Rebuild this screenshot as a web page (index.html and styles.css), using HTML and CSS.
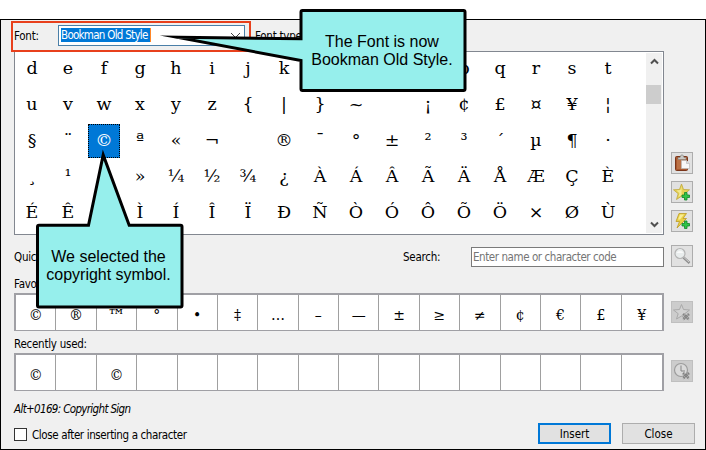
FILE: index.html
```
<!DOCTYPE html>
<html lang="en">
<head>
<meta charset="utf-8">
<title>Insert Symbol</title>
<link rel="stylesheet" href="styles.css">
</head>
<body>
<main class="dialog">
  <div class="font-row">
    <div class="font-field">
      <span class="font-label">Font:</span>
      <div class="combo"><span class="selected-text">Bookman Old Style</span>
        <svg class="chevron" width="11" height="7" viewBox="0 0 11 7"><path d="M1 1l4.500 4.500L10 1" fill="none" stroke="#444"/></svg>
      </div>
    </div>
    <span class="type-label">Font type:</span>
  </div>

  <div class="row row-chars">
    <div class="panel">
      <div class="chars" id="chars"></div>
      <div class="scrollbar">
        <svg width="9" height="7" viewBox="0 0 9 7"><path d="M1 5.500l3.500-3.500 3.500 3.500" fill="none" stroke="#505050" stroke-width="2"/></svg>
        <div class="thumb"></div>
        <svg class="down" width="9" height="7" viewBox="0 0 9 7"><path d="M1 1.500l3.500 3.500 3.500-3.500" fill="none" stroke="#505050" stroke-width="2"/></svg>
      </div>
    </div>
    <div class="tools">
      <button class="icon-btn" aria-label="Copy">
        <svg width="16" height="18" viewBox="0 0 16 18"><rect x="1.500" y="2.500" width="12" height="14" rx="1" fill="#a9582f" stroke="#7a351a"/><path d="M3 5h5v10H3z" fill="#bb7146"/><path d="M4 3.500h2L7 1h2l1 2.500h2v2H4z" fill="#c9c9c6" stroke="#85817a" stroke-width=".6"/><path d="M7.500 6.500h5l3 3v5h-8z" fill="#f8f8f8" stroke="#bbb" stroke-width=".7"/><path d="M12.500 6.500v3h3" fill="#ddd" stroke="#bbb" stroke-width=".7"/></svg>
      </button>
      <button class="icon-btn" aria-label="Add to favorites">
        <svg width="18" height="18" viewBox="0 0 18 18"><path d="M8.500 1l2 5.500 6 .3-4.700 3.900 1.700 5.800-5-3.300-5 3.300 1.700-5.800L.5 6.800l6-.3z" fill="#e6d254" stroke="#bfa83c" stroke-width=".8"/><path d="M8.500 3v9l-3 2 1-4-3-2.500 4-.5z" fill="#f3ea94"/><path d="M11.500 9.500h2.500v2.500h2.500v2.500H14V17h-2.500v-2.500H9V12h2.500z" fill="#30c448" stroke="#128529" stroke-width=".8"/></svg>
      </button>
      <button class="icon-btn" aria-label="Add to quick access">
        <svg width="18" height="18" viewBox="0 0 18 18"><path d="M6 1.500h7.500L10 6.500h3.500L4 16l2.500-6.500H3z" fill="#e9d045" stroke="#bd9c25" stroke-width=".8"/><path d="M7 2.500h4L7 7.500H5z" fill="#f8ed96"/><path d="M11.500 9h2.500v2.500h2.500V14H14v2.500h-2.500V14H9v-2.500h2.500z" fill="#30c448" stroke="#128529" stroke-width=".8"/></svg>
      </button>
    </div>
  </div>

  <div class="row row-search">
    <span class="quick-label">Quick</span>
    <span class="search-label">Search:</span>
    <input class="search" placeholder="Enter name or character code">
    <button class="icon-btn" aria-label="Search">
      <svg width="18" height="18" viewBox="0 0 18 18"><path d="M10.500 10.500l6 5.500" stroke="#8e8e8e" stroke-width="2.400"/><path d="M11 10.500l5 4.500" stroke="#ddd" stroke-width=".8"/><circle cx="7" cy="6.500" r="5" fill="#e9eded" stroke="#b4b4b4" stroke-width="1.200"/><path d="M3.500 6a4 4 0 0 1 7 0z" fill="#fafafa"/></svg>
    </button>
  </div>

  <div class="label fav-label">Favorites:</div>
  <div class="row row-strip">
    <div class="strip" id="favorites"></div>
    <button class="icon-btn disabled fav-btn" aria-label="Remove favorite">
      <svg width="18" height="18" viewBox="0 0 18 18"><path d="M8.500 1.500l2 5 6 .5-4.700 3.700 1.700 5.300-5-3-5 3 1.700-5.300L.5 7l6-.5z" fill="#d2d2d2" stroke="#a9a9a9"/><path d="M10 11l6 5.500M16 11l-6 5.500" stroke="#858585" stroke-width="2.600" stroke-dasharray="1.500 .5"/></svg>
    </button>
  </div>

  <div class="label recent-label">Recently used:</div>
  <div class="row row-strip">
    <div class="strip" id="recent"></div>
    <button class="icon-btn disabled recent-btn" aria-label="Clear recent">
      <svg width="18" height="18" viewBox="0 0 18 18"><circle cx="8" cy="8" r="6.500" fill="#dadada" stroke="#9c9c9c" stroke-width="1.200"/><path d="M8 3.500V9h4" fill="none" stroke="#858585"/><path d="M10 11l6 5.500M16 11l-6 5.500" stroke="#808080" stroke-width="2.600" stroke-dasharray="1.500 .5"/></svg>
    </button>
  </div>

  <div class="status">Alt+0169: Copyright Sign</div>
  <div class="footer">
    <span class="checkbox"></span>
    <span class="check-label">Close after inserting a character</span>
    <button class="btn primary">Insert</button>
    <button class="btn">Close</button>
  </div>
</main>

<div class="callout callout-font">
  <svg width="320" height="90" viewBox="150 5 320 90"><path d="M302.500 10.500H463.500Q465 10.500 465 12V89Q465 90.500 463.500 90.500H302.500Q301 90.500 301 89V60.500L177 37.300L301 38.800V12Q301 10.500 302.500 10.500Z"/></svg>
  <p>The Font is now<br>Bookman Old Style.</p>
</div>
<div class="callout callout-symbol">
  <svg width="160" height="170" viewBox="30 145 160 170"><path d="M39 225.200H88.500L103.200 155L129.200 225.200H180.500Q182 225.200 182 226.700V305.500Q182 307 180.500 307H39Q37.500 307 37.500 305.500V226.700Q37.500 225.200 39 225.200Z"/></svg>
  <p>We selected the<br>copyright symbol.</p>
</div>
<script src="script.js"></script>
</body>
</html>
```
FILE: styles.css
```
* { box-sizing: border-box; }
body {
  margin: 0;
  width: 706px;
  height: 450px;
  overflow: hidden;
  position: relative;
  background: #fff;
  color: #000;
  font: 11.5px/14px "DejaVu Sans Condensed", "DejaVu Sans", sans-serif;
  letter-spacing: -.25px;
}
.dialog {
  margin-top: 19px;
  height: 431px;
  border: 1px solid #000;
  background: #f0f0f0;
  padding-left: 13px;
}
button { font: inherit; color: inherit; padding: 0; }

.font-row { display: flex; height: 31px; }
.font-field {
  display: flex;
  width: 240px;
  height: 31px;
  margin: 1px 0 0 -3px;
  border: 2px solid #e8401c;
  position: relative;
  z-index: 1;
}
.font-label { width: 45px; padding: 6px 0 0 1px; }
.combo {
  display: flex;
  align-items: center;
  width: 187px;
  height: 21px;
  margin-top: 2px;
  padding: 0 3px 0 2px;
  border: 1px solid #4a7fa8;
  background: #fff;
}
.selected-text {
  height: 14px;
  margin-top: -1px;
  background: #0078d7;
  color: #fff;
  border-right: 1px solid #ff8728;
  white-space: nowrap;
  line-height: 14px;
  letter-spacing: -.72px;
  width: 90px;
}
.chevron { margin-left: auto; }
.type-label { margin: 9px 0 0 4px; }

.row { display: flex; }
.row-chars { height: 184px; }
.panel { display: flex; width: 650px; height: 184px; border: 1px solid #828790; background: #fff; }
.chars {
  display: grid;
  grid-template-columns: repeat(17, 36px);
  grid-auto-rows: 36px;
  flex: none;
  width: 632px;
  height: 182px;
  margin-left: -1px;
  font: 17.500px/33px "DejaVu Serif", serif;
  letter-spacing: 0;
  text-align: center;
}
.char.selected {
  height: 34px;
  width: 32px;
  margin: 0 2px;
  background: #0078d7;
  color: #fff;
  outline: 1px dotted #000;
  outline-offset: -1px;
}
.scrollbar { display: flex; flex-direction: column; align-items: center; width: 16px; height: 180px; margin: 1px 0; padding: 5px 0; background: #f0f0f0; }
.thumb { width: 15px; height: 19px; margin: 20px 1px 0 0; background: #cdcdcd; }
.down { margin-top: auto; }
.tools { display: flex; flex-direction: column; gap: 7px; padding: 101px 0 0 7px; }
.icon-btn {
  display: flex;
  align-items: center;
  justify-content: center;
  width: 22px;
  height: 22px;
  flex: none;
  border: 1px solid #adadad;
  background: #e1e1e1;
}
.icon-btn.disabled { background: #ccc; border-color: #bfbfbf; margin-left: 7px; }

.row-search { height: 42px; padding-top: 10px; }
.quick-label { width: 389px; padding-top: 5px; }
.search-label { width: 68px; padding-top: 5px; }
.search {
  width: 193px;
  height: 20px;
  margin: 2px 7px 0 0;
  padding: 0 1px;
  border: 1px solid #7a7a7a;
  background: #fff;
  font: inherit;
  letter-spacing: -.43px;
}
.search::placeholder { color: #757575; opacity: 1; }
.label { height: 16px; }
.row-strip { height: 38px; }
.strip {
  display: grid;
  grid-template-columns: repeat(16, 1fr);
  width: 650px;
  height: 38px;
  border: 2px solid #a0a0a5;
  border-bottom-width: 1px;
  background: #fff;
  text-align: center;
  font: 14px/41px "DejaVu Serif", serif;
  letter-spacing: 0;
}
.slot { border-right: 1px solid #a0a0a0; height: 35px; overflow: hidden; }
.slot:last-child { border-right: 0; }
.slot.wide { font-size: 18px; }
.fav-btn { margin-top: 8px; }
.recent-btn { margin-top: 7px; }
.recent-label { height: 22px; padding-top: 6px; }
.status { height: 29px; padding-top: 11px; font-style: italic; letter-spacing: -.66px; }
.footer { display: flex; height: 27px; padding-top: 3px; }
.checkbox { width: 13px; height: 13px; margin-top: 5px; border: 1px solid #333; background: #fff; }
.check-label { width: 511px; padding: 5px 0 0 5px; letter-spacing: -.38px; }
.btn { width: 73px; height: 21px; border: 1px solid #adadad; background: #e1e1e1; }
.btn.primary { border: 2px solid #0078d7; margin-right: 11px; }

.callout { position: absolute; z-index: 2; font: 16px/18px "Liberation Sans", sans-serif; letter-spacing: 0; text-align: center; }
.callout svg { display: block; }
.callout path { fill: #96efec; stroke: #000; stroke-width: 3; stroke-miterlimit: 30; }
.callout p { position: absolute; margin: 0; white-space: nowrap; }
.callout-font { left: 150px; top: 5px; }
.callout-font p { left: 151px; top: 28px; width: 162px; }
.callout-symbol { left: 30px; top: 145px; }
.callout-symbol p { left: 7px; top: 103px; width: 143px; }
```
FILE: script.js
```
const rows = [
  'defghijklmnopqrst',
  'uvwxyz{|}~\u00a0¡¢£¤¥¦',
  '§¨©ª«¬\u00a0®¯°±²³´µ¶·',
  '¸¹º»¼½¾¿ÀÁÂÃÄÅÆÇÈ',
  'ÉÊËÌÍÎÏÐÑÒÓÔÕÖ×ØÙ'
];

function fill(id, items, className) {
  const box = document.getElementById(id);
  for (const ch of items) {
    const cell = document.createElement('div');
    cell.className = className;
    cell.textContent = ch;
    box.append(cell);
  }
  return box;
}

const chars = fill('chars', [...rows.join('')], 'char');
[...chars.children].find(c => c.textContent === '©').classList.add('selected');
const favorites = fill('favorites', [...'©®™°•‡…–—±≥≠¢€£¥'], 'slot');
favorites.children[2].classList.add('wide');
fill('recent', [...'© ©             '], 'slot');
```
